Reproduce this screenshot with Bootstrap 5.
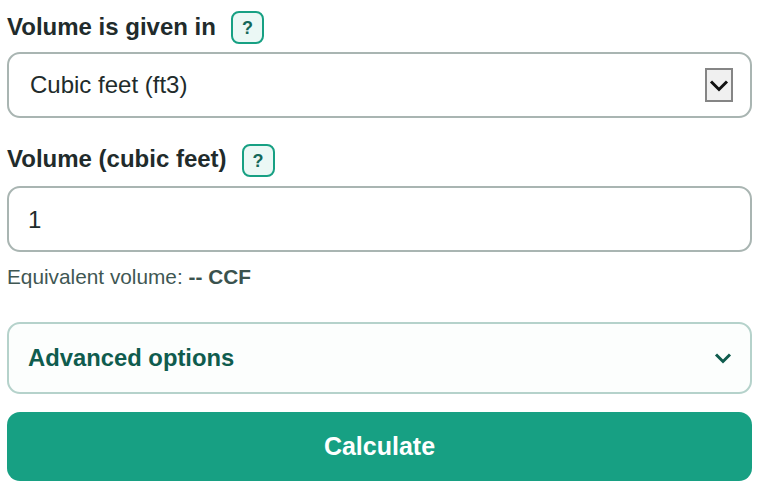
<!DOCTYPE html>
<html lang="en">
<head>
<meta charset="utf-8">
<title>Volume</title>
<link href="https://cdn.jsdelivr.net/npm/bootstrap@5.3.0/dist/css/bootstrap.min.css" rel="stylesheet">
<style>
body{background:#fff;font-family:"Liberation Sans",Arial,sans-serif;color:#212b2b;margin:0}
.calc-wrap{padding:11px 8px 0 7px}
.calc-label{font-size:24px;font-weight:700;line-height:30px;color:#212b2b;margin:0 0 2px}
.calc-row2 .calc-label{line-height:28px;margin-bottom:4px}
.help-chip{width:33px;height:33px;padding:0;border:2px solid #17a083;border-radius:8px;background:#ebf8f5;color:#14685a;font-size:18px;font-weight:700;line-height:1;margin-left:15px}
.calc-select.form-select,.calc-input.form-control{height:66px;border:2px solid #a9b5b2;border-radius:13px;font-size:24px;color:#212b2b;font-family:inherit;padding:0 21px;box-shadow:none}
.calc-input.form-control{padding:2px 19px 0}
.calc-select.form-select{background-image:url("data:image/svg+xml,%3Csvg xmlns='http://www.w3.org/2000/svg' width='28' height='34' viewBox='0 0 28 34'%3E%3Crect x='1' y='1' width='26' height='32' fill='%23f0f0f0' stroke='%23858585' stroke-width='2'/%3E%3Cpath d='M6 13.5 14 21.5 22 13.5' fill='none' stroke='%23111' stroke-width='3'/%3E%3C/svg%3E");background-repeat:no-repeat;background-position:right 17px center;background-size:28px 34px}
.calc-row2{margin-top:26px;margin-bottom:9px}
.calc-note{font-size:20.8px;line-height:26px;color:#3f5753;margin:12px 0 0}
.calc-note b{color:#3a524e}
.adv-toggle{height:72px;border:2px solid #b5d2cb;border-radius:13px;background:#fcfefd;color:#0f5c4e;font-size:23.8px;font-weight:700;padding:0 18px 0 19px;margin-top:32px}
.calc-btn.btn{height:69px;margin-top:18px;background:#17a083;border:0;border-radius:13px;color:#fff;font-size:25px;font-weight:700}
</style>
</head>
<body>
<form class="calc-wrap">
  <div class="d-flex align-items-center mb-2">
    <label class="calc-label" for="unit">Volume is given in</label>
    <button type="button" class="help-chip">?</button>
  </div>
  <select id="unit" class="form-select calc-select"><option>Cubic feet (ft3)</option></select>
  <div class="d-flex align-items-center calc-row2">
    <label class="calc-label" for="vol">Volume (cubic feet)</label>
    <button type="button" class="help-chip">?</button>
  </div>
  <input id="vol" class="form-control calc-input" type="text" value="1">
  <p class="calc-note">Equivalent volume: <b>-- CCF</b></p>
  <div class="adv-toggle d-flex align-items-center justify-content-between">
    <span>Advanced options</span>
    <svg width="18" height="12" viewBox="0 0 18 12"><path d="M2 2.5 9 9.5 16 2.5" fill="none" stroke="#0f5c4e" stroke-width="3"/></svg>
  </div>
  <button type="button" class="btn calc-btn w-100 d-block">Calculate</button>
</form>
</body>
</html>
